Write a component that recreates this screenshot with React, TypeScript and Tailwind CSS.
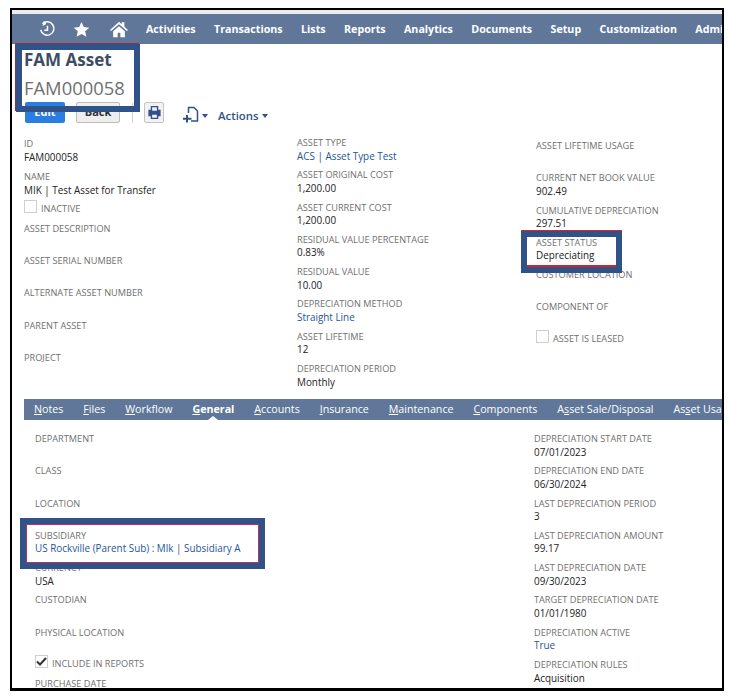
const font = "font-['Open_Sans',sans-serif]"

type FieldProps = { label: string; value?: string; link?: boolean; className?: string }

const Field = ({ label, value, link, className = 'h-[32.3px]' }: FieldProps) => (
  <div className={`leading-[12.6px] ${className}`}>
    <div className="text-[9.2px] text-[#6f6f6f] whitespace-nowrap">{label}</div>
    {value && <div className={`text-[9.9px] whitespace-nowrap ${link ? 'text-[#255599]' : 'text-[#222]'}`}>{value}</div>}
  </div>
)

const Check = ({ label, checked }: { label: string; checked?: boolean }) => (
  <div className="h-[23px] flex items-start gap-[4px]">
    <span className="w-[13px] h-[13px] border border-[#cfcfcf] bg-white flex items-center justify-center shrink-0">
      {checked && (
        <svg width="11" height="9" viewBox="0 0 11 9">
          <path d="M1 4.5 L4 7.5 L10 1" fill="none" stroke="#333" strokeWidth="2" />
        </svg>
      )}
    </span>
    <span className="text-[9.2px] text-[#6f6f6f] mt-[2px] whitespace-nowrap">{label}</span>
  </div>
)

// the blue annotation boxes drawn over the screenshot
const Marker = ({ className, inner = '' }: { className: string; inner?: string }) => (
  <div className={`absolute ${className}`}>
    <div className="absolute inset-0 border-[6px] border-[#2f5289]" />
    <div className={`absolute inset-[6px] ${inner}`} />
  </div>
)

const navItems = ['Activities', 'Transactions', 'Lists', 'Reports', 'Analytics', 'Documents', 'Setup', 'Customization', 'Admin']

const tabs = [
  { pre: '', key: 'N', post: 'otes' },
  { pre: '', key: 'F', post: 'iles' },
  { pre: '', key: 'W', post: 'orkflow' },
  { pre: '', key: 'G', post: 'eneral', active: true },
  { pre: '', key: 'A', post: 'ccounts' },
  { pre: '', key: 'I', post: 'nsurance' },
  { pre: '', key: 'M', post: 'aintenance' },
  { pre: '', key: 'C', post: 'omponents' },
  { pre: 'A', key: 's', post: 'set Sale/Disposal' },
  { pre: 'As', key: 's', post: 'et Usage' },
]

const NavBar = () => (
  <div className="h-[30px] bg-[#607799] flex items-center pl-[26px] overflow-hidden shrink-0">
    <svg width="18" height="18" viewBox="0 0 20 20" className="shrink-0" fill="none" stroke="#fff" strokeWidth="1.7">
      <path d="M5 4.2 A7.4 7.4 0 1 1 3 11" />
      <path d="M6.6 1.4 L8.6 4.4 L5.2 6" fill="#fff" strokeWidth="1" />
      <path d="M10.5 6.5 V11.5 H7" />
    </svg>
    <svg width="17" height="17" viewBox="0 0 24 24" className="ml-[17px] shrink-0" fill="#fff">
      <path d="M12 1.5 L15.2 8.6 L23 9.4 L17.2 14.6 L18.9 22.3 L12 18.3 L5.1 22.3 L6.8 14.6 L1 9.4 L8.8 8.6 Z" />
    </svg>
    <svg width="18" height="17" viewBox="0 0 20 18" className="ml-[20px] shrink-0" fill="#fff">
      <path d="M10 0.5 L13 3.2 V1 H16 V6 L20 9.5 L18.8 10.8 L10 3.2 L1.2 10.8 L0 9.5 Z" />
      <path d="M3.5 11 L10 5.4 L16.5 11 V17.5 H11.5 V12.5 H8.5 V17.5 H3.5 Z" />
    </svg>
    <div className="flex gap-[18.4px] ml-[18px] text-[10.7px] font-bold text-white whitespace-nowrap">
      {navItems.map(n => <span key={n}>{n}</span>)}
    </div>
  </div>
)

const Caret = () => (
  <span className="mt-[6px] w-0 h-0 border-x-[3.5px] border-x-transparent border-t-[4px] border-t-[#2f5289]" />
)

const Toolbar = () => (
  <div className="flex items-center h-[21px] mt-[2px] ml-[13px]">
    <div className="w-[40px] h-[21px] rounded-[2px] bg-[#2a7de1] text-white text-[11px] font-bold flex items-center justify-center">Edit</div>
    <div className="w-[44px] h-[21px] rounded-[2px] ml-[11px] bg-[#eeeeee] border border-[#bdbdbd] text-[#333] text-[11px] font-bold flex items-center justify-center">Back</div>
    <div className="w-px h-[20px] bg-[#d0d0d0] ml-[12px]" />
    <div className="w-[20px] h-[21px] ml-[11px] rounded-[2px] border border-[#c4c4c4] bg-[#f2f2f2] flex items-center justify-center">
      <svg width="15" height="15" viewBox="0 0 16 16" fill="#2f5289">
        <path d="M4 1 H12 V5 H14.5 V12 H12 V15 H4 V12 H1.5 V5 H4 Z M5.5 2.5 V6 H10.5 V2.5 Z M5.5 10.5 V13.5 H10.5 V10.5 Z" fillRule="evenodd" />
      </svg>
    </div>
    <svg width="17" height="17" viewBox="0 0 17 17" className="ml-[18px] mt-[4px]" fill="none" stroke="#2f5289" strokeWidth="1.5">
      <path d="M6.5 7 V1.5 H12 L15.5 5 V15 H9" />
      <path d="M5 9 V16.5 M1 12.8 H9.5" strokeWidth="2" />
    </svg>
    <span className="ml-[3px] flex"><Caret /></span>
    <span className="ml-[10px] mt-[6px] text-[11.4px] font-semibold text-[#2f5289]">Actions</span>
    <span className="ml-[3px] flex"><Caret /></span>
  </div>
)

const TopFields = () => (
  <div className="flex mt-[14px] ml-[12px] h-[262px]">
    <div className="w-[273px] pt-[1px]">
      <Field label="ID" value="FAM000058" className="h-[33.3px]" />
      <Field label="NAME" value="MIK | Test Asset for Transfer" className="h-[29px]" />
      <Check label="INACTIVE" />
      <Field label="ASSET DESCRIPTION" className="h-[31.7px]" />
      <Field label="ASSET SERIAL NUMBER" />
      <Field label="ALTERNATE ASSET NUMBER" />
      <Field label="PARENT ASSET" />
      <Field label="PROJECT" />
    </div>
    <div className="w-[239px]">
      <Field label="ASSET TYPE" value="ACS | Asset Type Test" link />
      <Field label="ASSET ORIGINAL COST" value="1,200.00" />
      <Field label="ASSET CURRENT COST" value="1,200.00" />
      <Field label="RESIDUAL VALUE PERCENTAGE" value="0.83%" />
      <Field label="RESIDUAL VALUE" value="10.00" />
      <Field label="DEPRECIATION METHOD" value="Straight Line" link />
      <Field label="ASSET LIFETIME" value="12" />
      <Field label="DEPRECIATION PERIOD" value="Monthly" />
    </div>
    <div className="pt-[3px]">
      <Field label="ASSET LIFETIME USAGE" />
      <Field label="CURRENT NET BOOK VALUE" value="902.49" />
      <Field label="CUMULATIVE DEPRECIATION" value="297.51" />
      <Field label="ASSET STATUS" value="Depreciating" />
      <Field label="CUSTOMER LOCATION" />
      <Field label="COMPONENT OF" className="h-[29px]" />
      <Check label="ASSET IS LEASED" />
    </div>
  </div>
)

const TabBar = () => (
  <div className="h-[21px] ml-[12px] bg-[#607799] flex items-center pl-[10px] gap-[19.9px] overflow-hidden text-[10.7px] text-white whitespace-nowrap shrink-0">
    {tabs.map(t => (
      <span key={t.key + t.post} className={`relative h-[21px] leading-[21px] ${t.active ? 'font-bold' : ''}`}>
        {t.pre}<span className="underline">{t.key}</span>{t.post}
        {t.active && (
          <span className="absolute left-1/2 -translate-x-1/2 bottom-0 w-0 h-0 border-x-[5px] border-x-transparent border-b-[4px] border-b-white" />
        )}
      </span>
    ))}
  </div>
)

const GeneralTab = () => (
  <div className="flex ml-[23px] mt-[13px]">
    <div className="w-[499px]">
      <Field label="DEPARTMENT" />
      <Field label="CLASS" />
      <Field label="LOCATION" />
      <Field label="SUBSIDIARY" value="US Rockville (Parent Sub) : Mlk | Subsidiary A" link />
      <Field label="CURRENCY" value="USA" />
      <Field label="CUSTODIAN" />
      <Field label="PHYSICAL LOCATION" className="h-[28px]" />
      <Check label="INCLUDE IN REPORTS" checked />
      <Field label="PURCHASE DATE" />
    </div>
    <div>
      <Field label="DEPRECIATION START DATE" value="07/01/2023" />
      <Field label="DEPRECIATION END DATE" value="06/30/2024" />
      <Field label="LAST DEPRECIATION PERIOD" value="3" />
      <Field label="LAST DEPRECIATION AMOUNT" value="99.17" />
      <Field label="LAST DEPRECIATION DATE" value="09/30/2023" />
      <Field label="TARGET DEPRECIATION DATE" value="01/01/1980" />
      <Field label="DEPRECIATION ACTIVE" value="True" link />
      <Field label="DEPRECIATION RULES" value="Acquisition" />
    </div>
  </div>
)

const App = () => (
  <div className={`w-[729px] h-[696px] bg-white overflow-hidden pt-[8px] pl-[10px] ${font}`}>
    <div className="relative w-[714px] h-[683px] border-2 border-black border-b-[3px] overflow-hidden">
      <div className="h-[4px] bg-[#ededed]" />
      <NavBar />
      <div className="ml-[12px] mt-[5px] h-[51px]">
        <div className="text-[17px] leading-[22px] font-bold text-[#3d4d63]">FAM Asset</div>
        <div className="text-[18.4px] leading-[28px] mt-[3px] text-[#6f6f6f]">FAM000058</div>
      </div>
      <Toolbar />
      <TopFields />
      <TabBar />
      <GeneralTab />

      <Marker className="left-[4px] top-[34px] w-[124px] h-[68px] shadow-[-1px_-1px_0_#9c2a44]" />
      <Marker className="left-[509px] top-[221px] w-[101px] h-[42px] shadow-[0_-1px_0_#d8232a]" inner="border-b-2 border-[#d8232a]" />
      <Marker className="left-[8px] top-[508px] w-[245px] h-[51px]" inner="border border-[#c0304f]" />
    </div>
  </div>
)

export default App
